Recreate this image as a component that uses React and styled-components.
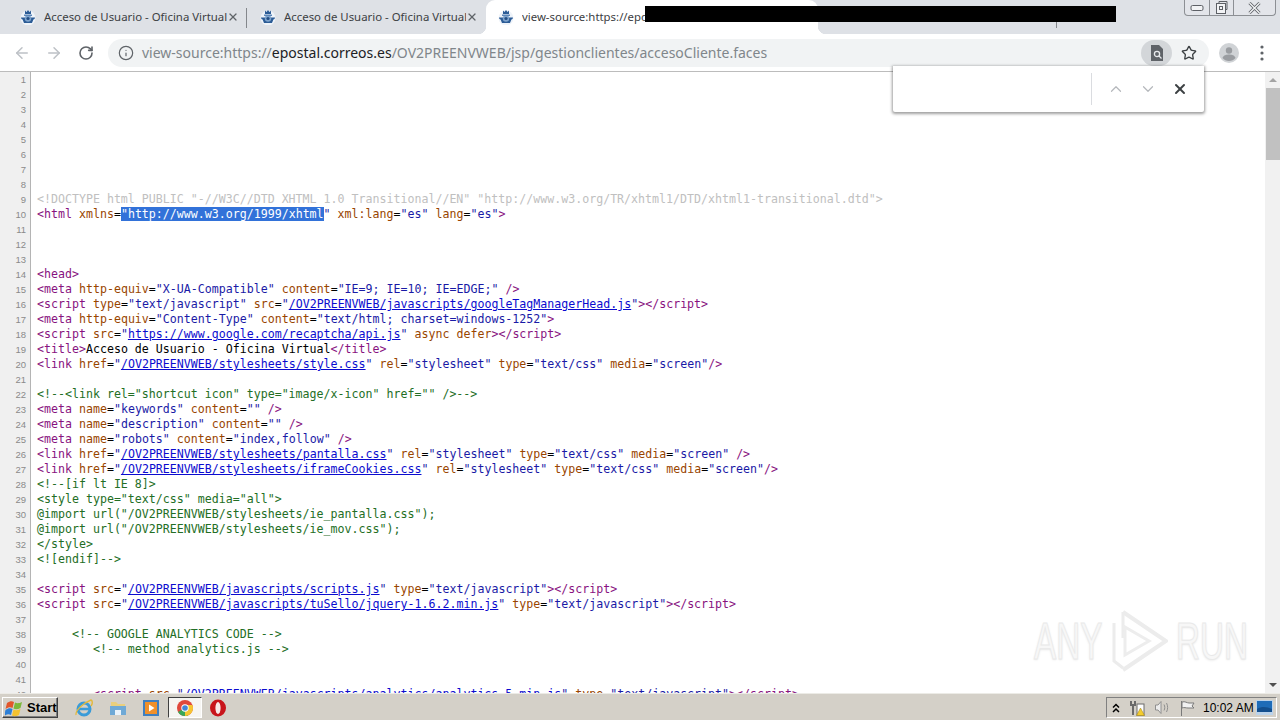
import React from 'react'
import styled, { createGlobalStyle } from 'styled-components'
import {
  ArrowLeft,
  ArrowRight,
  RotateCw,
  Info,
  Star,
  ChevronUp,
  ChevronDown,
  X,
} from 'lucide-react'

const SOURCE = [
  '', '', '', '', '', '', '', '',
  '<!DOCTYPE html PUBLIC "-//W3C//DTD XHTML 1.0 Transitional//EN" "http://www.w3.org/TR/xhtml1/DTD/xhtml1-transitional.dtd">',
  '<html xmlns="http://www.w3.org/1999/xhtml" xml:lang="es" lang="es">',
  '', '', '',
  '<head>',
  '<meta http-equiv="X-UA-Compatible" content="IE=9; IE=10; IE=EDGE;" />',
  '<script type="text/javascript" src="/OV2PREENVWEB/javascripts/googleTagManagerHead.js"></script>',
  '<meta http-equiv="Content-Type" content="text/html; charset=windows-1252">',
  '<script src="https://www.google.com/recaptcha/api.js" async defer></script>',
  '<title>Acceso de Usuario - Oficina Virtual</title>',
  '<link href="/OV2PREENVWEB/stylesheets/style.css" rel="stylesheet" type="text/css" media="screen"/>',
  '',
  '<!--<link rel="shortcut icon" type="image/x-icon" href="" />-->',
  '<meta name="keywords" content="" />',
  '<meta name="description" content="" />',
  '<meta name="robots" content="index,follow" />',
  '<link href="/OV2PREENVWEB/stylesheets/pantalla.css" rel="stylesheet" type="text/css" media="screen" />',
  '<link href="/OV2PREENVWEB/stylesheets/iframeCookies.css" rel="stylesheet" type="text/css" media="screen"/>',
  '<!--[if lt IE 8]>',
  '<style type="text/css" media="all">',
  '@import url("/OV2PREENVWEB/stylesheets/ie_pantalla.css");',
  '@import url("/OV2PREENVWEB/stylesheets/ie_mov.css");',
  '</style>',
  '<![endif]-->',
  '',
  '<script src="/OV2PREENVWEB/javascripts/scripts.js" type="text/javascript"></script>',
  '<script src="/OV2PREENVWEB/javascripts/tuSello/jquery-1.6.2.min.js" type="text/javascript"></script>',
  '',
  '     <!-- GOOGLE ANALYTICS CODE -->',
  '        <!-- method analytics.js -->',
  '', '',
  '        <script src="/OV2PREENVWEB/javascripts/analytics/analytics-5.min.js" type="text/javascript"></script>',
]

const SELECTED_VALUE = '"http://www.w3.org/1999/xhtml"'
const TOKEN = /(<\/?\w+|\/?>)|([\w:-]+)(=)|("[^"]*")|\b(async|defer)\b/g

const GlobalStyle = createGlobalStyle`
  html, body {
    margin: 0;
    width: 1280px;
    height: 720px;
    overflow: hidden;
    background: #fff;
  }
`

const Windowed = styled.div`
  position: relative;
  display: flex;
  flex-direction: column;
  width: 1280px;
  height: 720px;
  overflow: hidden;
  font-family: 'Noto Sans', sans-serif;
`

/* tab strip */
const TabStrip = styled.div`
  display: flex;
  flex: 0 0 34px;
  background: #dee1e6;
`

const Tab = styled.div`
  position: relative;
  display: flex;
  flex: 0 0 ${(p) => p.$width}px;
  align-items: center;
  box-sizing: border-box;
  padding: 0 0 0 ${(p) => p.$inset}px;
  overflow: ${(p) => (p.$active ? 'visible' : 'hidden')};
  background: ${(p) => (p.$active ? '#fff' : 'transparent')};
  border-radius: ${(p) => (p.$active ? '9px 9px 0 0' : '0')};

  ${(p) =>
    p.$divider &&
    `&::after {
      content: '';
      position: absolute;
      top: 8px;
      right: 0;
      width: 1px;
      height: 20px;
      background: #84878c;
    }`}

  ${(p) =>
    p.$active &&
    `&::before, &::after {
      content: '';
      position: absolute;
      bottom: 0;
      width: 8px;
      height: 8px;
    }
    &::before {
      left: -8px;
      background: radial-gradient(circle at 0 0, transparent 8px, #fff 8.5px);
    }
    &::after {
      right: -8px;
      background: radial-gradient(circle at 100% 0, transparent 8px, #fff 8.5px);
    }`}
`

const TabTitle = styled.span`
  flex: 1;
  min-width: 0;
  margin-left: 8px;
  overflow: hidden;
  font-size: 11.4px;
  line-height: 34px;
  color: #3c4043;
  white-space: nowrap;
`

const TabClose = styled.span`
  display: flex;
  flex: 0 0 auto;
  margin-right: 8px;
  color: #5f6368;
`

const WindowControls = styled.div`
  display: flex;
  flex: 0 0 92px;
  height: 16px;
  margin-left: auto;
  margin-right: 4px;
  box-sizing: border-box;
  background: #e3e5ea;
  border: 1px solid #8c8f94;
  border-top: none;
  border-radius: 0 0 4px 4px;
`

const WindowButton = styled.span`
  display: flex;
  flex: ${(p) => p.$grow};
  align-items: center;
  justify-content: center;
  border-left: ${(p) => (p.$first ? 'none' : '1px solid #8c8f94')};
`

const Redaction = styled.div`
  position: absolute;
  top: 6px;
  left: 645px;
  width: 471px;
  height: 16px;
  background: #000;
`

/* toolbar */
const Toolbar = styled.div`
  display: flex;
  flex: 0 0 38px;
  align-items: center;
  box-sizing: border-box;
  padding: 0 5px 0 6px;
  background: #fff;
  border-bottom: 1px solid #bcbcbc;
`

const NavButton = styled.span`
  display: flex;
  flex: 0 0 32px;
  align-items: center;
  justify-content: center;
  color: ${(p) => p.$color};
`

const Omnibox = styled.div`
  display: flex;
  flex: 1;
  align-items: center;
  height: 28px;
  margin-left: 6px;
  padding: 0 3px 0 10px;
  background: #f1f3f4;
  border-radius: 14px;
`

const UrlText = styled.div`
  flex: 1;
  margin-left: 8px;
  font-size: 14px;
  color: #80868b;
  white-space: nowrap;
`

const UrlHost = styled.span`
  color: #202124;
`

const LensPill = styled.span`
  display: flex;
  flex: 0 0 31px;
  align-items: center;
  justify-content: center;
  height: 26px;
  background: #d3d6d9;
  border-radius: 13px;
`

const StarSlot = styled.span`
  display: flex;
  flex: 0 0 34px;
  align-items: center;
  justify-content: center;
  color: #3c4043;
`

const ToolbarEnd = styled.span`
  display: flex;
  flex: 0 0 ${(p) => p.$width}px;
  align-items: center;
  justify-content: center;
`

/* source view */
const Content = styled.div`
  display: flex;
  flex: 1;
  min-height: 0;
  background: #fff;
`

const Rows = styled.div`
  flex: 1;
  min-width: 0;
  overflow: hidden;
`

const Row = styled.div`
  display: flex;
  height: 15px;
`

const LineNumber = styled.div`
  flex: 0 0 26px;
  padding-right: 4px;
  font-family: 'Liberation Sans', sans-serif;
  font-size: 9.5px;
  line-height: 15px;
  color: #8a8a8a;
  text-align: right;
  background: #f0f0f0;
  border-right: 1px solid #b4b4b4;
`

const Code = styled.div`
  flex: 1;
  padding-left: 6px;
  font-family: 'DejaVu Sans Mono', monospace;
  font-size: 11.62px;
  line-height: 15px;
  color: #000;
  white-space: pre;
`

const TagName = styled.span`
  color: #881280;
`

const AttrName = styled.span`
  color: #994500;
`

const AttrValue = styled.span`
  color: #1a1aa6;
`

const SourceLink = styled.a`
  color: #0b0bcf;
  text-decoration: underline;
`

const CommentText = styled.span`
  color: #236e25;
`

const DoctypeText = styled.span`
  color: #c0c0c0;
`

const Selected = styled.span`
  color: #fff;
  background: #3272d9;
`

const Scrollbar = styled.div`
  display: flex;
  flex: 0 0 15px;
  flex-direction: column;
  align-items: center;
  background: #f1f1f1;
`

const ScrollArrow = styled.span`
  flex: 0 0 auto;
  width: 0;
  height: 0;
  margin: ${(p) => (p.$down ? 'auto 0 6px' : '6px 0 0')};
  border-right: 4px solid transparent;
  border-left: 4px solid transparent;
  border-top: ${(p) => (p.$down ? '4px solid #505050' : 'none')};
  border-bottom: ${(p) => (p.$down ? 'none' : '4px solid #a3a3a3')};
`

const ScrollThumb = styled.div`
  flex: 0 0 72px;
  width: 14px;
  margin-top: 6px;
  background: #c1c1c1;
`

/* find bar */
const FindBar = styled.div`
  position: absolute;
  top: 66px;
  left: 893px;
  display: flex;
  align-items: center;
  box-sizing: border-box;
  width: 311px;
  height: 46px;
  padding-left: 198px;
  background: #fff;
  box-shadow: 0 1px 3px 1px rgba(0, 0, 0, 0.38);
  border-radius: 0 0 2px 2px;
`

const FindDivider = styled.span`
  flex: 0 0 1px;
  height: 32px;
  background: #dadce0;
`

const FindButton = styled.span`
  display: flex;
  flex: 0 0 32px;
  align-items: center;
  justify-content: center;
  color: ${(p) => p.$color};
`

const FindArrows = styled.div`
  display: flex;
  margin-left: 8px;
`

/* watermark */
const Watermark = styled.div`
  position: absolute;
  top: 608px;
  left: 1034px;
  display: flex;
  align-items: center;
  gap: 8px;
  pointer-events: none;
`

const WatermarkWord = styled.span`
  display: block;
  width: ${(p) => p.$width}px;
  font-family: 'Liberation Sans', sans-serif;
  font-size: 52px;
  line-height: 66px;
  color: #f7f7f7;
  -webkit-text-stroke: 1px #e9e9e9;
  text-shadow: 0 1px 3px rgba(0, 0, 0, 0.1);
  transform: scaleX(0.64);
  transform-origin: 0 50%;
  white-space: nowrap;
`

/* taskbar */
const Taskbar = styled.div`
  display: flex;
  flex: 0 0 27px;
  align-items: center;
  box-sizing: border-box;
  padding: 1px 3px 0 2px;
  background: #d4d0c8;
  border-top: 1px solid #ecebe6;
`

const StartButton = styled.div`
  display: flex;
  flex: 0 0 51px;
  align-items: center;
  gap: 2px;
  box-sizing: border-box;
  height: 21px;
  padding-left: 2px;
  font-family: 'Liberation Sans', sans-serif;
  font-size: 13px;
  font-weight: 700;
  color: #000;
  border: 1px solid;
  border-color: #fff #404040 #404040 #fff;
  box-shadow: inset -1px -1px 0 #808080;
`

const QuickLaunch = styled.div`
  display: flex;
  margin-left: 10px;
`

const TaskSlot = styled.span`
  display: flex;
  flex: 0 0 33.5px;
  align-items: center;
  justify-content: center;
  box-sizing: border-box;
  height: 21px;
  ${(p) =>
    p.$pressed &&
    `background: #f6f5f2;
    border: 1px solid;
    border-color: #404040 #fff #fff #404040;`}
`

const Tray = styled.div`
  display: flex;
  flex: 0 0 171px;
  align-items: center;
  box-sizing: border-box;
  height: 21px;
  margin-left: auto;
  padding-left: 5px;
  font-family: 'Liberation Sans', sans-serif;
  font-size: 12px;
  color: #000;
  border: 1px solid;
  border-color: #808080 #fff #fff #808080;
`

const TrayIcon = styled.span`
  display: flex;
  flex: 0 0 ${(p) => p.$width}px;
  align-items: center;
  justify-content: center;
`

const Clock = styled.span`
  flex: 0 0 52px;
  white-space: nowrap;
`

const CorreosIcon = () => (
  <svg width="16" height="16" viewBox="0 0 16 16">
    <circle cx="8" cy="9" r="7.5" fill="#eef3f9" />
    <path d="M5 1.5l1.5 1.5L8 1l1.5 2L11 1.5V5H5z" fill="#2c5c96" />
    <path d="M1 8.5h14c0 1-.6 1.6-1.6 2L12 14H4l-1.4-3.5C1.6 10.100 1 9.500 1 8.500z" fill="#2c5c96" />
    <circle cx="8" cy="9.500" r="3.200" fill="#7ea3cc" />
    <circle cx="8" cy="9.500" r="1.600" fill="#234e85" />
    <rect x="4" y="5.500" width="8" height="1.500" fill="#5c86b8" />
  </svg>
)

const TabCross = () => <X size={12} strokeWidth={2.4} />

const MinimizeGlyph = () => (
  <svg width="14" height="8" viewBox="0 0 14 8">
    <rect x="1" y="1.500" width="12" height="5" rx="1.500" fill="#f2f3f5" stroke="#5d6066" />
  </svg>
)

const RestoreGlyph = () => (
  <svg width="15" height="13" viewBox="0 0 15 13">
    <path d="M5 2.500V.5h8v8h-2" fill="none" stroke="#5d6066" />
    <rect x="2.500" y="2.500" width="9" height="10" fill="#f2f3f5" stroke="#5d6066" />
    <rect x="5.500" y="5.500" width="3" height="3" fill="none" stroke="#5d6066" />
  </svg>
)

const CloseGlyph = () => (
  <svg width="13" height="12" viewBox="0 0 13 12">
    <path d="M1.500 1l10 10M11.500 1l-10 10" stroke="#5d6066" strokeWidth="3" />
    <path d="M1.500 1l10 10M11.500 1l-10 10" stroke="#f2f3f5" strokeWidth="1.400" />
  </svg>
)

const LensIcon = () => (
  <svg width="14" height="16" viewBox="0 0 14 16">
    <path d="M1 0h8l4 4v12H1z" fill="#5f6368" />
    <circle cx="7" cy="9" r="2.600" fill="none" stroke="#e8eaed" strokeWidth="1.300" />
    <path d="M9 11l2.500 2.500" stroke="#e8eaed" strokeWidth="1.300" />
  </svg>
)

const AvatarIcon = () => (
  <svg width="20" height="20" viewBox="0 0 20 20">
    <circle cx="10" cy="10" r="10" fill="#d0d3d6" />
    <circle cx="10" cy="7.500" r="3.200" fill="#9a9da1" />
    <path d="M3.500 15c1-3 4-3.500 6.500-3.500s5.500.5 6.500 3.500c-1.500 1.800-4 3-6.500 3s-5-1.200-6.500-3z" fill="#9a9da1" />
  </svg>
)

const MenuDots = () => (
  <svg width="4" height="16" viewBox="0 0 4 16">
    <circle cx="2" cy="2" r="1.600" fill="#5f6368" />
    <circle cx="2" cy="8" r="1.600" fill="#5f6368" />
    <circle cx="2" cy="14" r="1.600" fill="#5f6368" />
  </svg>
)

const WatermarkLogo = () => (
  <svg width="58" height="64" viewBox="0 0 58 64" fill="none">
    <path d="M13 3l43 29-43 29" stroke="#ececec" strokeWidth="4" />
    <path d="M13 3v26M4 14v38l9 7" stroke="#ececec" strokeWidth="3" />
    <path d="M15 18l24 14-24 14z" stroke="#ededed" strokeWidth="3" />
  </svg>
)

const WindowsFlag = () => (
  <svg width="20" height="18" viewBox="0 0 20 18">
    <path d="M2 4c3-2 5-2 7-1l-1.500 6c-2-1-4-1-7 1z" fill="#e2562b" />
    <path d="M10 3.500c2 1 4 1 7-.5l-1.500 6c-3 1.500-5 1.500-7 .5z" fill="#7cb83a" />
    <path d="M.5 11c3-2 5-2 7-1L6 16c-2-1-4-1-7 1z" fill="#2d7fd6" />
    <path d="M8.500 10.500c2 1 4 1 7-.5L14 16c-3 1.500-5 1.500-7 .5z" fill="#f4c22f" />
  </svg>
)

const IeIcon = () => (
  <svg width="20" height="20" viewBox="0 0 20 20" fill="none">
    <circle cx="10" cy="11" r="6" stroke="#3a9bd8" strokeWidth="3" />
    <path d="M5 11h10" stroke="#3a9bd8" strokeWidth="2.500" />
    <path d="M2 17C1 13 9 5 17 2c2 1 1.500 4 0 6" stroke="#e4b93a" strokeWidth="1.400" />
  </svg>
)

const FolderIcon = () => (
  <svg width="18" height="18" viewBox="0 0 18 18">
    <path d="M2 3h5l2 2h7v11H2z" fill="#e9cf7d" />
    <path d="M1 7h16v9H1z" fill="#6fa9d6" />
    <path d="M6 16v-5h6v5z" fill="#eaf3fb" />
  </svg>
)

const MediaIcon = () => (
  <svg width="18" height="18" viewBox="0 0 18 18">
    <rect x="1" y="1" width="16" height="16" fill="#3f7fc0" />
    <rect x="3" y="3" width="12" height="12" fill="#f0902a" />
    <path d="M7 5.500l5.500 3.500L7 12.500z" fill="#fff" />
  </svg>
)

const ChromeIcon = () => (
  <svg width="16" height="16" viewBox="0 0 16 16">
    <circle cx="8" cy="8" r="8" fill="#e0483c" />
    <path d="M8 8L1 12a8 8 0 0 0 7 4c1 0 2-.200 3-.600z" fill="#3aa757" />
    <path d="M8 5h7.400A8 8 0 0 1 8 16z" fill="#f6c531" />
    <circle cx="8" cy="8" r="3.700" fill="#fff" />
    <circle cx="8" cy="8" r="2.800" fill="#4285d8" />
  </svg>
)

const OperaIcon = () => (
  <svg width="16" height="18" viewBox="0 0 16 18">
    <ellipse cx="8" cy="9" rx="8" ry="8.500" fill="#c8141b" />
    <ellipse cx="8" cy="9" rx="2.600" ry="6" fill="#f7e9e9" />
  </svg>
)

const TrayChevrons = () => (
  <svg width="8" height="10" viewBox="0 0 8 10" fill="none" stroke="#000" strokeWidth="1.500">
    <path d="M1 4.500l3-3 3 3M1 9l3-3 3 3" />
  </svg>
)

const NetworkIcon = () => (
  <svg width="16" height="16" viewBox="0 0 16 16">
    <path d="M1 1h2v3h2V1h2v5H5v9H3V6H1z" fill="#6a6a6a" />
    <rect x="8" y="4" width="7" height="11" fill="#fdfdfd" stroke="#6a6a6a" />
    <path d="M11.500 8l4 7.500h-8z" fill="#f4cc2e" stroke="#9a7c10" strokeWidth=".5" />
  </svg>
)

const SpeakerIcon = () => (
  <svg width="17" height="15" viewBox="0 0 17 15" fill="none" stroke="#8f8f8f">
    <path d="M1.500 5v5h2.500l3 3.500v-12L4 5z" fill="#ececec" />
    <path d="M10 4.500c1 2 1 4 0 6M12.500 3c1.500 3 1.500 6 0 9" />
  </svg>
)

const TrayFlag = () => (
  <svg width="17" height="16" viewBox="0 0 17 16" fill="#f1f1f1" stroke="#7a7a7a">
    <path d="M2.500 1v15" />
    <path d="M3 2c3-1 5 1 7 1h5l-2 3 2 2H9C7 8 5 7 3 8z" />
  </svg>
)

const DesktopIcon = () => (
  <svg width="17" height="15" viewBox="0 0 17 15">
    <rect x="0" y="0" width="17" height="15" fill="#bcd3ea" />
    <rect x="1" y="1" width="15" height="11" fill="#1e6cb8" />
    <path d="M1 9c5-3 10-2 15 0v3H1z" fill="#134f8e" />
  </svg>
)

const AttributeValue = ({ value, attr }) => {
  if (value === SELECTED_VALUE) {
    return (
      <>
        <Selected>{value.slice(0, -1)}</Selected>
        <AttrValue>"</AttrValue>
      </>
    )
  }
  if (attr === 'src' || attr === 'href') {
    const inner = value.slice(1, -1)
    return (
      <AttrValue>
        "{inner && <SourceLink>{inner}</SourceLink>}"
      </AttrValue>
    )
  }
  return <AttrValue>{value}</AttrValue>
}

const highlight = (line) => {
  const text = line.trim()
  if (text.startsWith('<!DOCTYPE')) return <DoctypeText>{line}</DoctypeText>
  if (
    text.startsWith('<!--') ||
    text.startsWith('<![') ||
    text.startsWith('@import') ||
    text === '<style type="text/css" media="all">' ||
    text === '</style>'
  ) {
    return <CommentText>{line}</CommentText>
  }

  const parts = []
  let cursor = 0
  let attr = ''
  for (const match of line.matchAll(TOKEN)) {
    parts.push(line.slice(cursor, match.index))
    const key = match.index
    if (match[1]) parts.push(<TagName key={key}>{match[1]}</TagName>)
    if (match[2]) {
      attr = match[2]
      parts.push(<AttrName key={key}>{match[2]}</AttrName>, match[3])
    }
    if (match[4]) parts.push(<AttributeValue key={key} value={match[4]} attr={attr} />)
    if (match[5]) parts.push(<AttrName key={key}>{match[5]}</AttrName>)
    cursor = match.index + match[0].length
  }
  parts.push(line.slice(cursor))
  return parts.map((part, i) => <React.Fragment key={i}>{part}</React.Fragment>)
}

const App = () => (
  <Windowed>
    <GlobalStyle />
    <TabStrip>
      <Tab $width={247} $inset={20} $divider>
        <CorreosIcon />
        <TabTitle>Acceso de Usuario - Oficina Virtual</TabTitle>
        <TabClose><TabCross /></TabClose>
      </Tab>
      <Tab $width={239} $inset={13}>
        <CorreosIcon />
        <TabTitle>Acceso de Usuario - Oficina Virtual</TabTitle>
        <TabClose><TabCross /></TabClose>
      </Tab>
      <Tab $width={240} $inset={12} $active>
        <CorreosIcon />
        <TabTitle>view-source:https://epostal.correos.es/OV2PREENVWEB</TabTitle>
      </Tab>
      <Tab $width={239} $inset={0} $divider />
      <WindowControls>
        <WindowButton $grow="25" $first><MinimizeGlyph /></WindowButton>
        <WindowButton $grow="25"><RestoreGlyph /></WindowButton>
        <WindowButton $grow="43"><CloseGlyph /></WindowButton>
      </WindowControls>
    </TabStrip>
    <Redaction />

    <Toolbar>
      <NavButton $color="#bdc1c6"><ArrowLeft size={18} strokeWidth={2} /></NavButton>
      <NavButton $color="#bdc1c6"><ArrowRight size={18} strokeWidth={2} /></NavButton>
      <NavButton $color="#5f6368"><RotateCw size={16} strokeWidth={2.4} /></NavButton>
      <Omnibox>
        <Info size={16} strokeWidth={1.8} color="#5f6368" />
        <UrlText>
          view-source:https://<UrlHost>epostal.correos.es</UrlHost>/OV2PREENVWEB/jsp/gestionclientes/accesoCliente.faces
        </UrlText>
        <LensPill><LensIcon /></LensPill>
        <StarSlot><Star size={16} strokeWidth={2} /></StarSlot>
      </Omnibox>
      <ToolbarEnd $width={40}><AvatarIcon /></ToolbarEnd>
      <ToolbarEnd $width={26}><MenuDots /></ToolbarEnd>
    </Toolbar>

    <Content>
      <Rows>
        {SOURCE.map((line, i) => (
          <Row key={i}>
            <LineNumber>{i + 1}</LineNumber>
            <Code>{highlight(line)}</Code>
          </Row>
        ))}
      </Rows>
      <Scrollbar>
        <ScrollArrow />
        <ScrollThumb />
        <ScrollArrow $down />
      </Scrollbar>
    </Content>

    <FindBar>
      <FindDivider />
      <FindArrows>
        <FindButton $color="#b5b8bc"><ChevronUp size={18} strokeWidth={1.6} /></FindButton>
        <FindButton $color="#b5b8bc"><ChevronDown size={18} strokeWidth={1.6} /></FindButton>
        <FindButton $color="#3c4043"><X size={16} strokeWidth={3} /></FindButton>
      </FindArrows>
    </FindBar>

    <Watermark>
      <WatermarkWord $width={68}>ANY</WatermarkWord>
      <WatermarkLogo />
      <WatermarkWord $width={60}>RUN</WatermarkWord>
    </Watermark>

    <Taskbar>
      <StartButton>
        <WindowsFlag />
        Start
      </StartButton>
      <QuickLaunch>
        <TaskSlot><IeIcon /></TaskSlot>
        <TaskSlot><FolderIcon /></TaskSlot>
        <TaskSlot><MediaIcon /></TaskSlot>
        <TaskSlot $pressed><ChromeIcon /></TaskSlot>
        <TaskSlot><OperaIcon /></TaskSlot>
      </QuickLaunch>
      <Tray>
        <TrayIcon $width={8}><TrayChevrons /></TrayIcon>
        <TrayIcon $width={34}><NetworkIcon /></TrayIcon>
        <TrayIcon $width={14}><SpeakerIcon /></TrayIcon>
        <TrayIcon $width={32}><TrayFlag /></TrayIcon>
        <Clock>10:02 AM</Clock>
        <TrayIcon $width={19}><DesktopIcon /></TrayIcon>
      </Tray>
    </Taskbar>
  </Windowed>
)

export default App
